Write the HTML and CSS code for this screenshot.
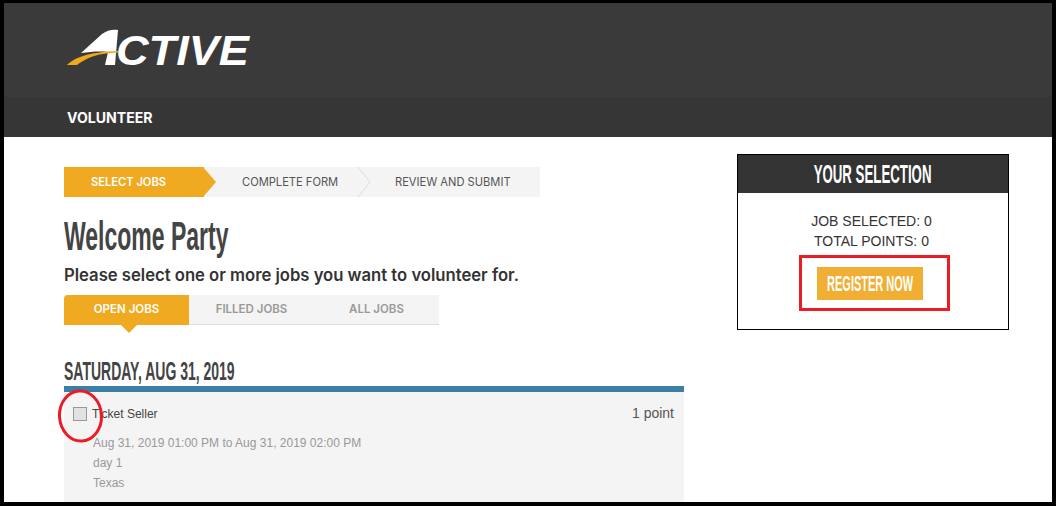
FILE: index.html
```html
<!DOCTYPE html>
<html lang="en">
<head>
<meta charset="utf-8">
<title>Volunteer</title>
<link rel="stylesheet" href="styles.css">
</head>
<body>
<div class="frame">
  <header class="masthead">
    <div class="brand">
      <svg class="logo" width="190" height="56" viewBox="0 0 190 56">
        <path class="logo-a" d="M17 25 L38 6 C43 2 49 1 54 2 L51 37 L41 37 L44 24 C35 23 26 24 17 25Z"/>
        <path class="logo-swoosh" d="M3 37 C10 30 24 24 54 23 L54 24.500 C34 25 22 30 13 37Z"/>
        <text class="logo-word" x="52" y="37" textLength="133" lengthAdjust="spacingAndGlyphs">CTIVE</text>
      </svg>
    </div>
    <nav class="sitenav"><span class="sitenav-item">VOLUNTEER</span></nav>
  </header>
  <main class="content">
    <section class="main-col">
      <ol class="steps">
        <li class="step step-active">SELECT JOBS</li>
        <li class="step step-second">COMPLETE FORM<svg class="chevron" width="13" height="30" viewBox="0 0 13 30"><path d="M0 0 L12 15 L0 30"/></svg></li>
        <li class="step step-third">REVIEW AND SUBMIT</li>
      </ol>
      <h1 class="title"><span class="condensed">Welcome Party</span></h1>
      <p class="lead">Please select one or more jobs you want to volunteer for.</p>
      <div class="tabs">
        <span class="tab tab-active">OPEN JOBS</span>
        <span class="tab">FILLED JOBS</span>
        <span class="tab">ALL JOBS</span>
      </div>
      <h2 class="date"><span class="condensed">SATURDAY, AUG 31, 2019</span></h2>
      <article class="job">
        <div class="job-head">
          <label class="job-name"><span class="checkbox"></span>Ticket Seller</label>
          <span class="job-points">1 point</span>
        </div>
        <div class="job-meta">
          <div>Aug 31, 2019 01:00 PM to Aug 31, 2019 02:00 PM</div>
          <div>day 1</div>
          <div>Texas</div>
        </div>
      </article>
      <svg class="annot-circle" width="50" height="56" viewBox="0 0 50 56"><ellipse cx="23.500" cy="27" rx="21" ry="25" transform="rotate(-4 23.500 27)"/></svg>
    </section>
    <aside class="panel">
      <h3 class="panel-title"><span class="condensed">YOUR SELECTION</span></h3>
      <div class="panel-body">
        <p class="panel-line">JOB SELECTED: 0</p>
        <p class="panel-line">TOTAL POINTS: 0</p>
        <div class="annot-box"><button class="register"><span class="condensed">REGISTER NOW</span></button></div>
      </div>
    </aside>
  </main>
</div>
</body>
</html>
```
FILE: styles.css
```css
* { box-sizing: border-box; }
html, body { margin: 0; padding: 0; background: #fff; }
body { width: 1057px; height: 506px; overflow: hidden; font-family: "Liberation Sans", Arial, sans-serif; }
.frame { width: 1056px; height: 506px; border: 4px solid #000; border-top-width: 3px; overflow: hidden; background: #fff; }
.masthead { background: #3a3a3a; }
.brand { height: 94px; padding: 25px 0 0 60px; }
.logo { display: block; }
.logo-a { fill: #fff; }
.logo-swoosh { fill: #f0a81f; }
.logo-word { fill: #fff; font: italic 700 42px "Liberation Sans", sans-serif; }
.sitenav { height: 40px; background: #363636; padding-left: 63px; display: flex; align-items: center; }
.sitenav-item { color: #fff; font: 700 14.100px Inter, sans-serif; }
.content { display: flex; padding: 17px 0 0 60px; }
.main-col { width: 620px; position: relative; padding-top: 13px; }
.condensed { display: inline-block; white-space: nowrap; }
.steps { list-style: none; margin: 0; padding: 0; display: flex; width: 476px; height: 30px; background: #f4f4f4; }
.step { font: 400 11.150px/30px Inter, sans-serif; color: #555; position: relative; white-space: nowrap; }
.step-active { width: 140px; padding-left: 27px; background: #f0aa22; color: #fff; font-weight: 600; }
.step-active::after { content: ""; position: absolute; left: 139px; top: 0; border-left: 13px solid #f0aa22; border-top: 15px solid transparent; border-bottom: 15px solid transparent; }
.step-second { width: 154px; padding-left: 38px; }
.chevron { position: absolute; right: -13px; top: 0; fill: none; stroke: #ddd; }
.step-third { padding-left: 37px; }
.title { margin: 16px 0 0; font: 700 40px/46px "Liberation Sans", sans-serif; color: #444; }
.title .condensed { transform: scaleX(.575); transform-origin: left center; }
.lead { margin: 4px 0 0; font: 600 16.650px/24px Inter, sans-serif; color: #333; }
.tabs { display: flex; width: 375px; height: 30px; margin-top: 8px; background: #f4f4f4; border-bottom: 1px solid #ddd; }
.tab { width: 125px; text-align: center; font: 600 11.500px/29px Inter, sans-serif; color: #999; }
.tab-active { position: relative; background: #f0aa22; color: #fff; border-radius: 4px 0 0 0; height: 30px; }
.tab-active::after { content: ""; position: absolute; left: 56px; top: 29px; border-top: 9px solid #f0aa22; border-left: 9px solid transparent; border-right: 9px solid transparent; }
.date { margin: 31px 0 0; font: 700 25px/30px "Liberation Sans", sans-serif; color: #444; }
.date .condensed { transform: scaleX(.56); transform-origin: left center; }
.job { background: #f4f4f4; border-top: 6px solid #3b7ea6; height: 120px; padding: 14px 10px 0 9px; }
.job-head { display: flex; justify-content: space-between; font-size: 12px; line-height: 16px; color: #444; }
.job-name { display: flex; align-items: center; }
.checkbox { width: 14px; height: 14px; margin-right: 5px; background: #e2e2e2; border: 1px solid #999; }
.job-points { font-size: 14px; line-height: 14px; color: #555; }
.job-meta { margin: 11px 0 0 20px; font-size: 12px; line-height: 20px; color: #999; }
.annot-circle { position: absolute; left: -7px; top: 235px; fill: none; stroke: #ec1c24; stroke-width: 3; }
.panel { width: 272px; height: 176px; margin-left: 53px; border: 1px solid #000; }
.panel-title { margin: 0; height: 38px; background: #333; color: #fff; text-align: center; font: 700 26px/38px "Liberation Sans", sans-serif; overflow: hidden; white-space: nowrap; display: flex; justify-content: center; }
.panel-title .condensed { flex: none; transform: scaleX(.51); }
.panel-body { display: flex; flex-direction: column; align-items: center; padding-top: 18px; }
.panel-line { margin: 0; width: 100%; padding-right: 3px; text-align: center; font-size: 14px; line-height: 20px; color: #333; }
.annot-box { margin: 4px 0 0 3px; width: 151px; height: 56px; padding-left: 15px; border: 3px solid #ec1c24; display: flex; align-items: center; }
.register { border: 0; width: 106px; height: 33px; padding: 0; background: #f0ae33; color: #fff; font: 700 22px/33px "Liberation Sans", sans-serif; display: flex; justify-content: center; overflow: hidden; }
.register .condensed { flex: none; transform: scaleX(.5); }
```
